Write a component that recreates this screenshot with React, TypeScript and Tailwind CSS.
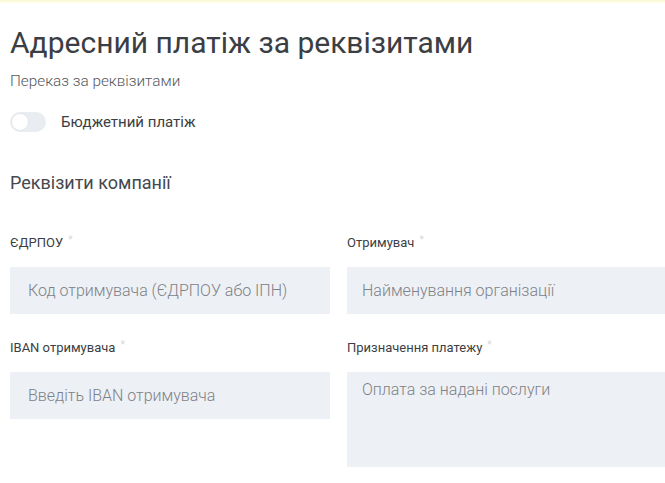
import { useState } from 'react';

function Label({ text }: { text: string }) {
  return (
    <div className="flex items-start text-[13px] leading-[16px] text-[#3b3e43]">
      <span>{text}</span>
      <span className="ml-[5px] -mt-[3px] text-[10px] text-[#d5d8dc]">*</span>
    </div>
  );
}

export default function App() {
  const [budget, setBudget] = useState(false);

  return (
    <div className="w-[665px] h-[483px] overflow-hidden bg-white font-['Roboto',sans-serif]">
      {/* top strip */}
      <div className="h-[4px] bg-gradient-to-b from-[#fbf7cf] to-white" />

      <div className="pl-[10px] pt-[21px]">
        <h1 className="text-[30px] leading-[36px] font-normal text-[#3b3e43]">
          Адресний платіж за реквізитами
        </h1>
        <p className="mt-[10px] text-[15.3px] leading-[20px] font-light text-[#55585d]">Переказ за реквізитами</p>

        {/* budget toggle */}
        <div className="mt-[21px] flex items-center h-[20px]">
          <button
            onClick={() => setBudget(!budget)}
            className={`relative w-[36px] h-[20px] rounded-full ${budget ? 'bg-[#f5d730]' : 'bg-[#e9ecf0]'}`}
          >
            <span
              className={`absolute top-[1px] w-[18px] h-[18px] rounded-full bg-white border border-[#e3e6ea] ${budget ? 'left-[17px]' : 'left-[1px]'}`}
            />
          </button>
          <span className="ml-[15px] text-[15px] leading-[20px] text-[#3b3e43]">Бюджетний платіж</span>
        </div>

        <h2 className="mt-[39px] text-[18px] leading-[24px] font-normal text-[#45484d]">Реквізити компанії</h2>

        {/* form grid */}
        <div className="mt-[40px] grid grid-cols-[320px_320px] gap-x-[17px] gap-y-[26px]">
          <div>
            <Label text="ЄДРПОУ" />
            <input
              placeholder="Код отримувача (ЄДРПОУ або ІПН)"
              className="mt-[16px] w-full h-[47px] pl-[18px] bg-[#edf0f4] text-[16px] font-light text-[#3b3e43] placeholder:text-[#7d8288] outline-none"
            />
          </div>
          <div>
            <Label text="Отримувач" />
            <input
              placeholder="Найменування організації"
              className="mt-[16px] w-full h-[47px] pl-[15px] bg-[#edf0f4] text-[16px] font-light text-[#3b3e43] placeholder:text-[#7d8288] outline-none"
            />
          </div>
          <div>
            <Label text="IBAN отримувача" />
            <input
              placeholder="Введіть IBAN отримувача"
              className="mt-[16px] w-full h-[47px] pl-[18px] bg-[#edf0f4] text-[16px] font-light text-[#3b3e43] placeholder:text-[#7d8288] outline-none"
            />
          </div>
          <div>
            <Label text="Призначення платежу" />
            <textarea
              placeholder="Оплата за надані послуги"
              className="mt-[16px] block w-full h-[95px] pl-[15px] pt-[6px] resize-none bg-[#edf0f4] text-[16px] leading-[24px] font-light text-[#3b3e43] placeholder:text-[#7d8288] outline-none"
            />
          </div>
        </div>
      </div>
    </div>
  );
}
